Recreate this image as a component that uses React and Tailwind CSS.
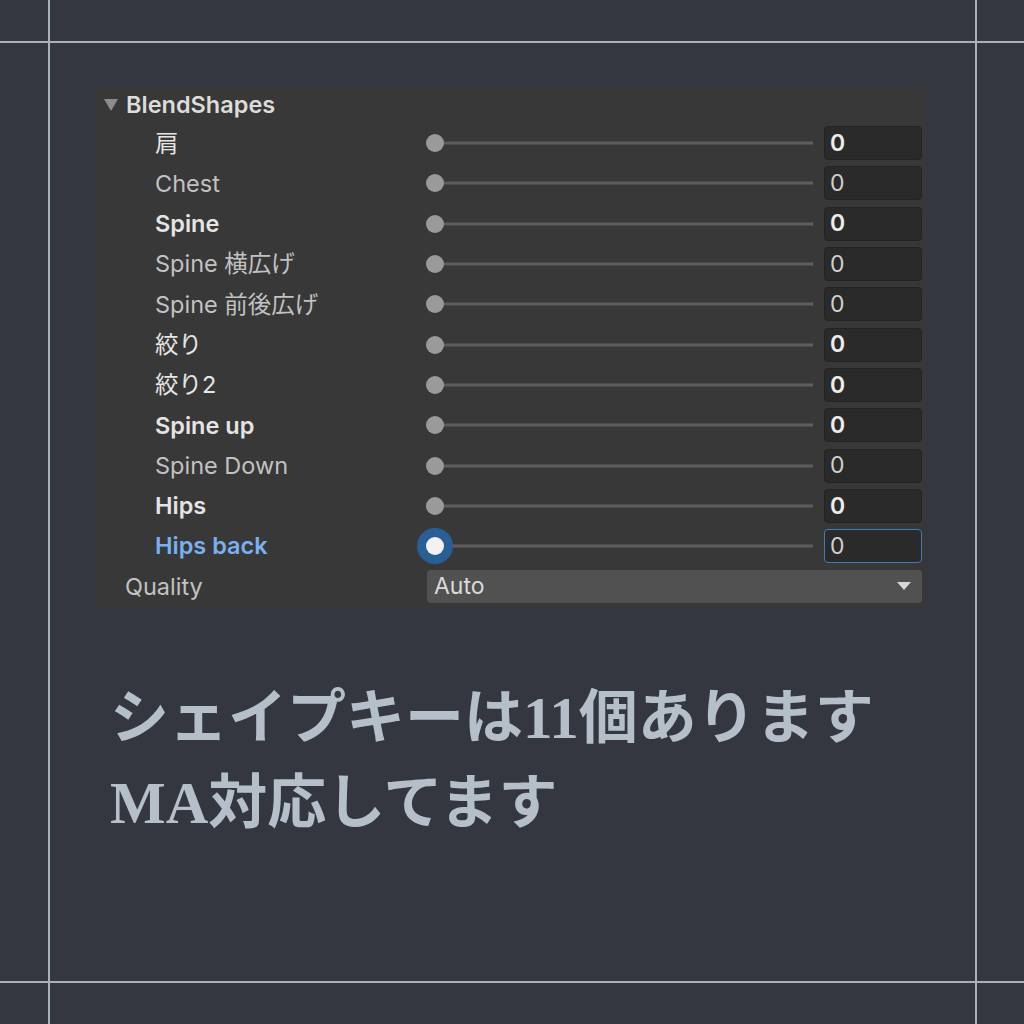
import React from 'react';

const UI_FONT = { fontFamily: 'Inter, "Noto Sans CJK JP", sans-serif' };

const ROWS = [
  { label: '肩', bold: true, cjk: true },
  { label: 'Chest', bold: false },
  { label: 'Spine', bold: true },
  { label: 'Spine 横広げ', bold: false },
  { label: 'Spine 前後広げ', bold: false },
  { label: '絞り', bold: true, cjk: true },
  { label: '絞り2', bold: true, cjk: true },
  { label: 'Spine up', bold: true },
  { label: 'Spine Down', bold: false },
  { label: 'Hips', bold: true },
  { label: 'Hips back', bold: true, active: true },
];

function Slider({ active }) {
  return (
    <div className="relative h-full flex-1">
      {/* track */}
      <div className="absolute left-[9px] right-[5px] top-1/2 h-[3px] -translate-y-1/2 bg-[#5e5e5e]" />
      {/* knob */}
      {active ? (
        <div className="absolute left-[-9px] top-1/2 flex h-[36px] w-[36px] -translate-y-1/2 items-center justify-center rounded-full bg-[#2a5f95]">
          <div className="h-[18px] w-[18px] rounded-full bg-[#f2f2f2]" />
        </div>
      ) : (
        <div className="absolute left-0 top-1/2 h-[18px] w-[18px] -translate-y-1/2 rounded-full bg-[#9a9a9a]" />
      )}
    </div>
  );
}

function Row({ label, bold, cjk, active }) {
  let labelClass = 'text-[#c2c2c2]';
  if (active) labelClass = 'font-semibold text-[#7ab0ef]';
  else if (bold && cjk) labelClass = 'text-[#e6e6e6]';
  else if (bold) labelClass = 'font-semibold text-[#e4e4e4]';

  return (
    <div className="flex h-[40.3px] items-center">
      <div className={`w-[330px] shrink-0 pl-[59px] text-[23.5px] ${labelClass}`}>{label}</div>
      <Slider active={active} />
      <div
        className={`ml-[6px] mr-[3px] flex h-[34px] w-[98px] shrink-0 items-center rounded-[4px] border bg-[#2a2a2a] pl-[5px] text-[23px] ${
          active ? 'border-[#3b7cc0]' : 'border-[#232323]'
        } ${bold && !active ? 'font-semibold text-[#ececec]' : 'text-[#d0d0d0]'}`}
      >
        0
      </div>
    </div>
  );
}

export default function App() {
  return (
    <div className="relative h-[1024px] w-[1024px] overflow-hidden bg-[#343640]">
      {/* ---- Guide lines ---- */}
      <div className="absolute left-0 right-0 top-[41px] h-[2px] bg-[#a8b2bc]" />
      <div className="absolute left-0 right-0 top-[981px] h-[2px] bg-[#a8b2bc]" />
      <div className="absolute bottom-0 left-[48px] top-0 w-[2px] bg-[#a8b2bc]" />
      <div className="absolute bottom-0 left-[975px] top-0 w-[2px] bg-[#a8b2bc]" />

      <div className="pl-[96px] pt-[88px]">
        {/* ---- Inspector panel ---- */}
        <div className="w-[829px] bg-[#383838]" style={UI_FONT}>
          <div className="flex h-[35px] items-center gap-[7px] pl-[7px] pb-[2px]">
            <svg width="16" height="14" viewBox="0 0 16 14">
              <path d="M1 1 L15 1 L8 13 Z" fill="#8c8c8c" />
            </svg>
            <span className="text-[23.5px] font-semibold text-[#dcdcdc]">BlendShapes</span>
          </div>

          {ROWS.map((r) => (
            <Row key={r.label} {...r} />
          ))}

          <div className="flex h-[40.3px] items-center">
            <div className="w-[331px] shrink-0 pl-[29px] text-[23.5px] text-[#c2c2c2]">Quality</div>
            <div className="mr-[3px] flex h-[33px] flex-1 items-center justify-between rounded-[4px] bg-[#515151] pl-[7px] pr-[10px]">
              <span className="text-[23px] text-[#dadada]">Auto</span>
              <svg width="16" height="10" viewBox="0 0 16 10">
                <path d="M1 1 L15 1 L8 9 Z" fill="#d8d8d8" />
              </svg>
            </div>
          </div>
        </div>

        {/* ---- Caption ---- */}
        <div
          className="mt-[69px] pl-[14px] text-[59px] font-bold leading-[85px] text-[#b4bfc9]"
          style={{ fontFamily: '"Liberation Serif", "Noto Sans CJK JP", serif' }}
        >
          <p>シェイプキーは11個あります</p>
          <p>MA対応してます</p>
        </div>
      </div>
    </div>
  );
}
